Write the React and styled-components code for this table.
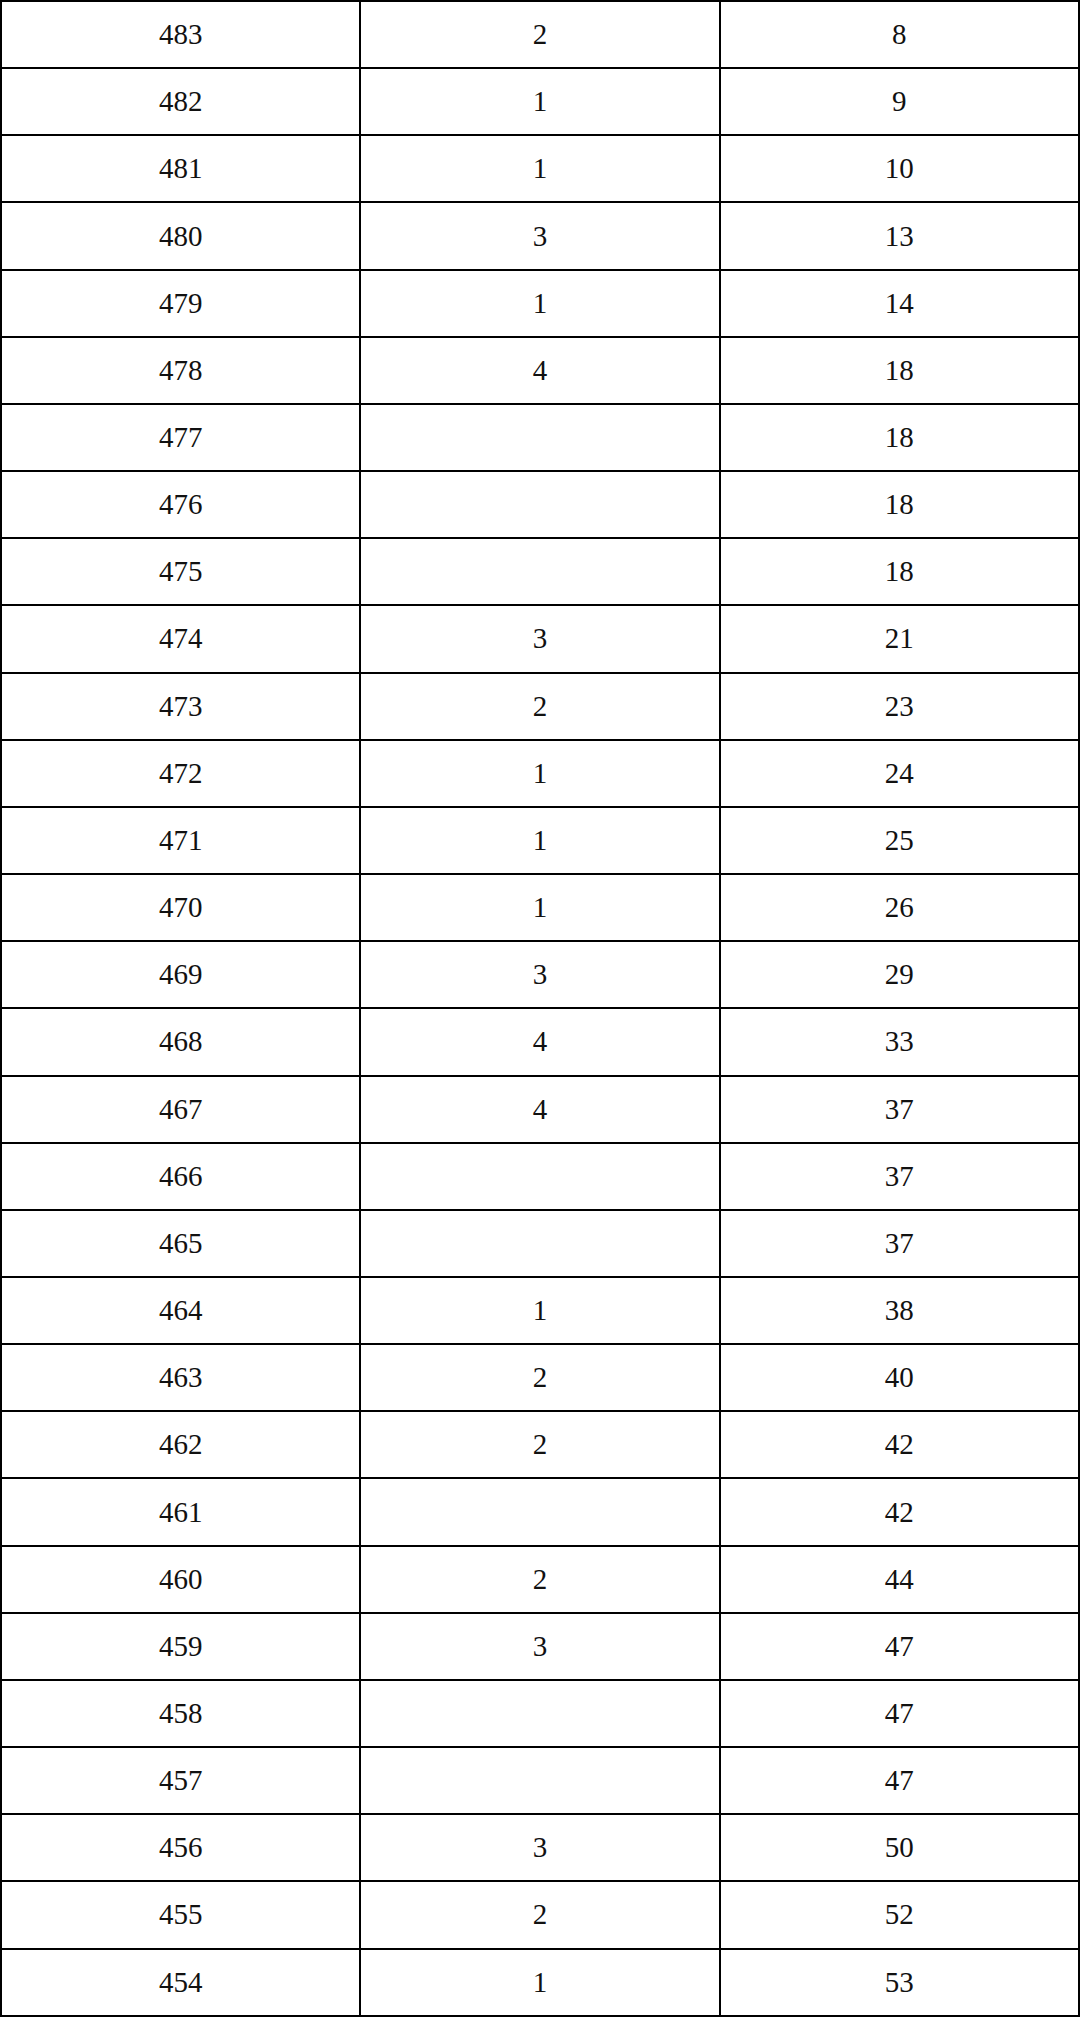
import React from 'react'
import styled, { createGlobalStyle } from 'styled-components'

const GlobalStyle = createGlobalStyle`
  html, body {
    margin: 0;
    padding: 0;
    background: #ffffff;
  }
`

const Table = styled.table`
  width: 1080px;
  height: 2017px;
  border-collapse: collapse;
  table-layout: fixed;
  font-family: "Liberation Serif", "Noto Serif CJK SC", serif;
  font-size: 29px;
  color: #111;
`

const Cell = styled.td`
  border: 2px solid #000;
  text-align: center;
  vertical-align: middle;
  padding: 0;
  line-height: 1;
`

const rows = [
  [483, 2, 8], [482, 1, 9], [481, 1, 10], [480, 3, 13], [479, 1, 14],
  [478, 4, 18], [477, '', 18], [476, '', 18], [475, '', 18], [474, 3, 21],
  [473, 2, 23], [472, 1, 24], [471, 1, 25], [470, 1, 26], [469, 3, 29],
  [468, 4, 33], [467, 4, 37], [466, '', 37], [465, '', 37], [464, 1, 38],
  [463, 2, 40], [462, 2, 42], [461, '', 42], [460, 2, 44], [459, 3, 47],
  [458, '', 47], [457, '', 47], [456, 3, 50], [455, 2, 52], [454, 1, 53],
]

const App = () => (
  <>
    <GlobalStyle />
    <Table>
      <tbody>
        {rows.map(([score, count, total]) => (
          <tr key={score}>
            <Cell>{score}</Cell>
            <Cell>{count}</Cell>
            <Cell>{total}</Cell>
          </tr>
        ))}
      </tbody>
    </Table>
  </>
)

export default App
